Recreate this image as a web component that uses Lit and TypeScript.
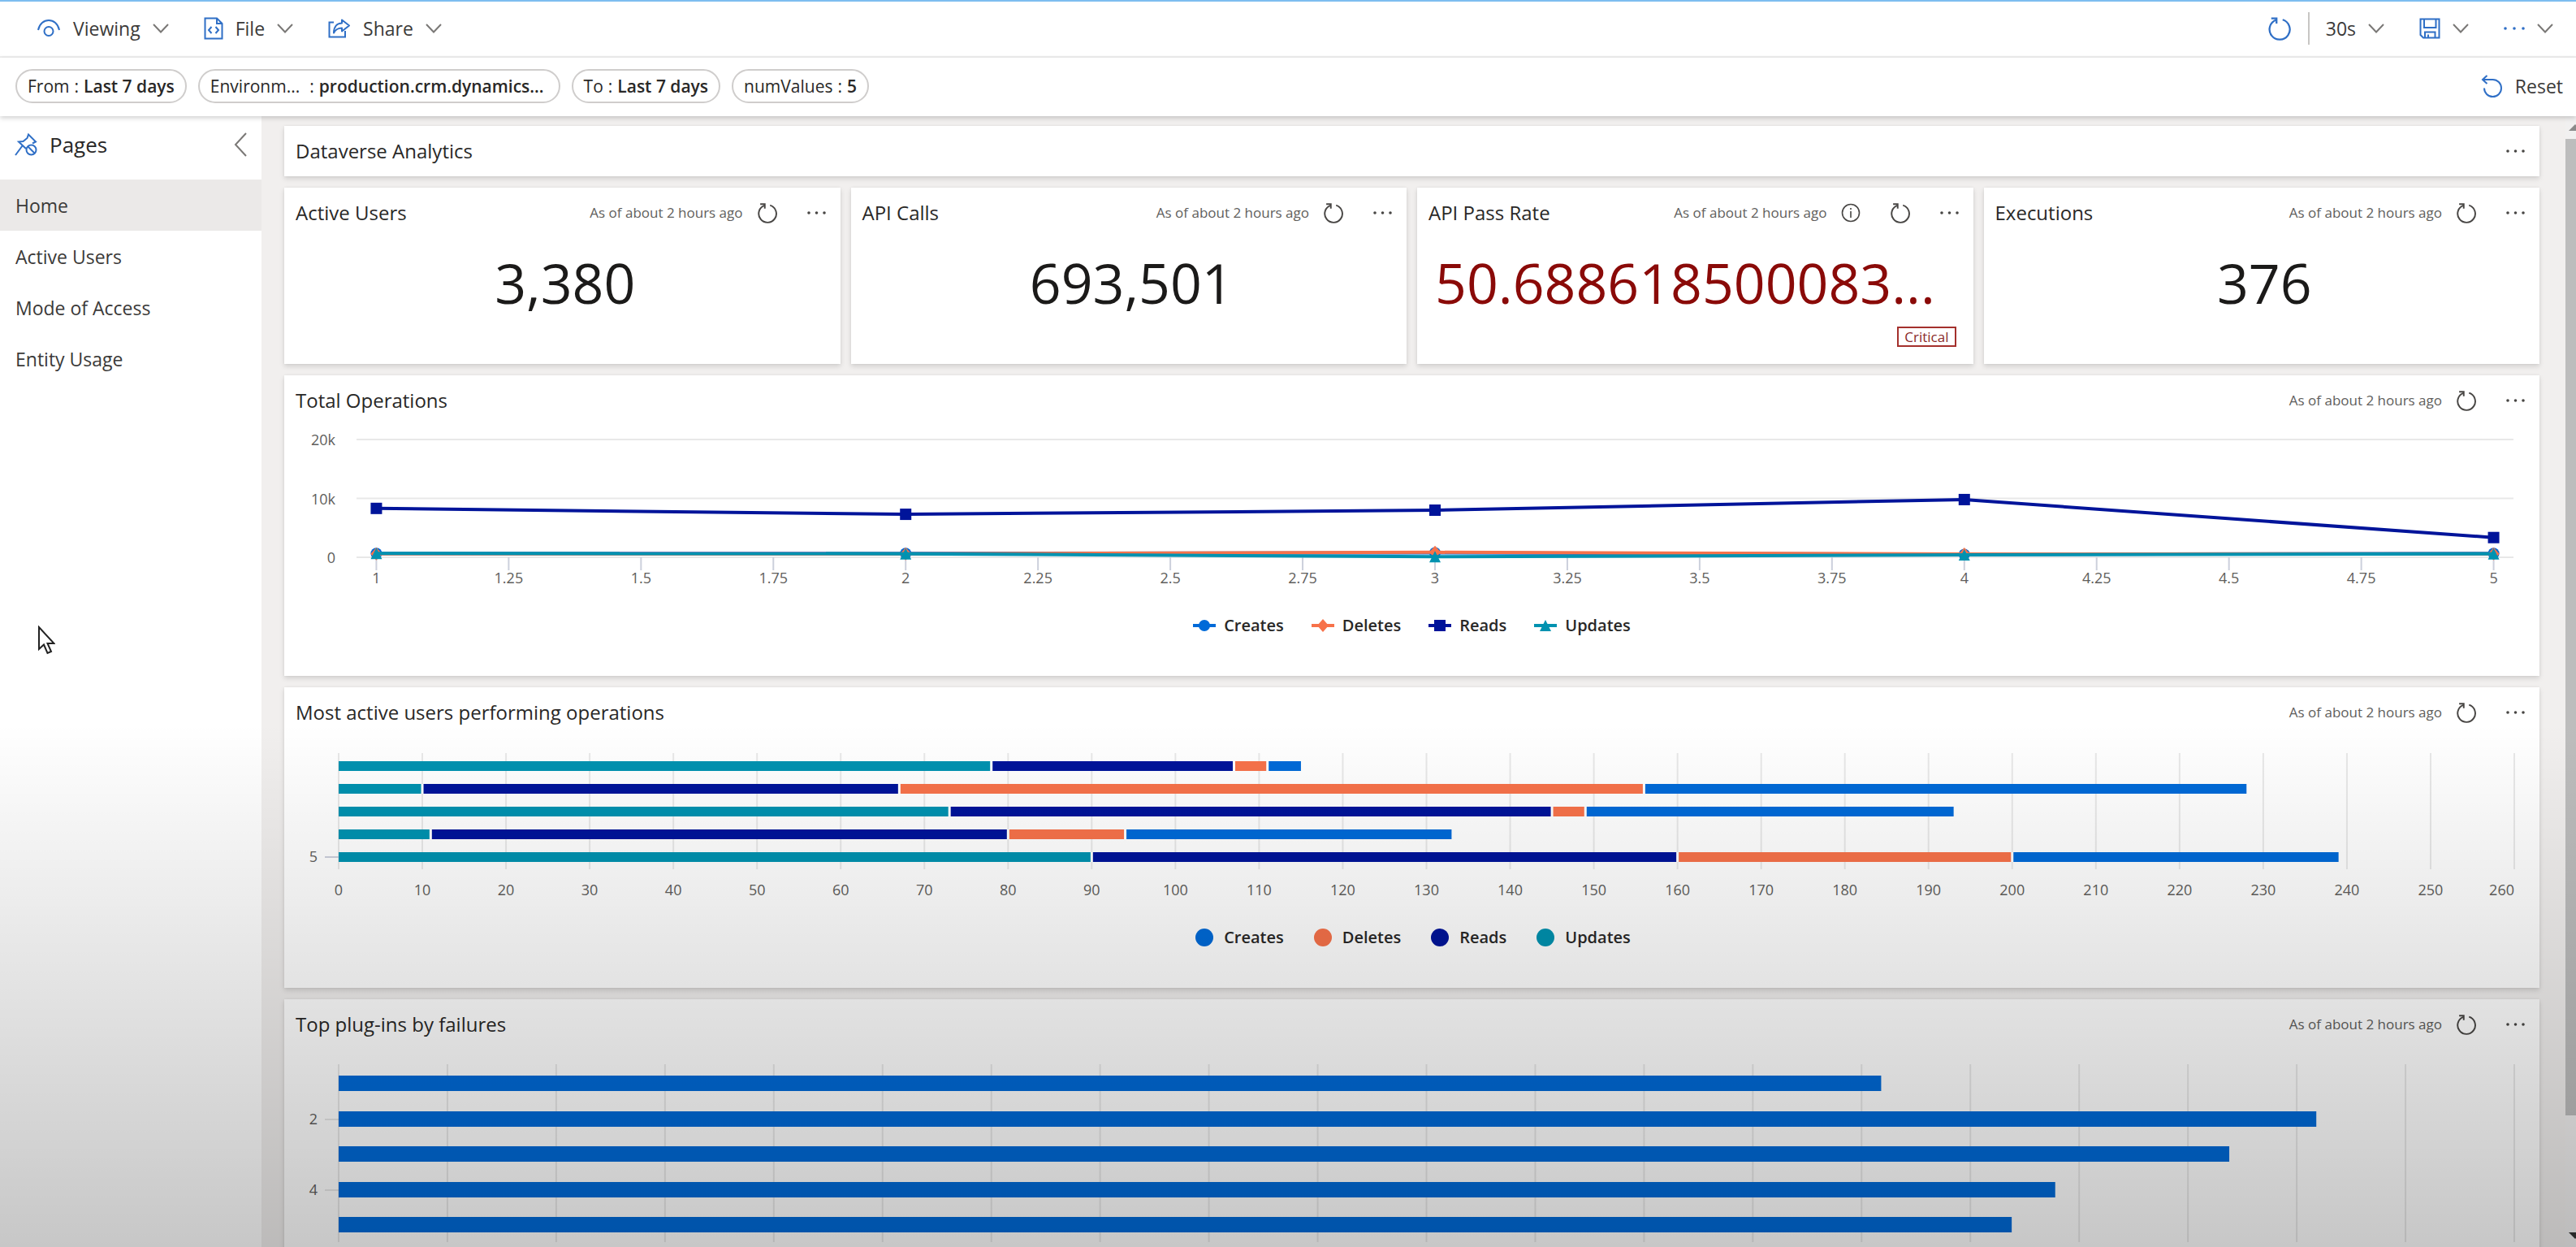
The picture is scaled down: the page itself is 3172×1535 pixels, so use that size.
import { LitElement, html, svg, css, nothing } from "lit";
import { customElement, property } from "lit/decorators.js";

type Series = { name: string; color: string; shape: "circle" | "diamond" | "square" | "triangle" };

const SERIES: Series[] = [
  { name: "Creates", color: "#006ad8", shape: "circle" },
  { name: "Deletes", color: "#f7724a", shape: "diamond" },
  { name: "Reads", color: "#00149a", shape: "square" },
  { name: "Updates", color: "#0092b0", shape: "triangle" },
];

/* Icons ---------------------------------------------------------------- */

const stroke = (w: number, h: number, body: unknown, width = 2) => html`<svg
  width=${w} height=${h} viewBox="0 0 ${w} ${h}" fill="none" stroke="currentColor"
  stroke-width=${width} aria-hidden="true">${body}</svg>`;

const chevron = () => stroke(20, 12, svg`<path d="M1 1L10 10.5L19 1"/>`);
const eye = () => stroke(30, 24, svg`<path d="M2 14C5 -2 25 -2 28 14"/><circle cx="15" cy="15.5" r="5.5"/>`);
const file = () => stroke(24, 28, svg`<path d="M1.500 1.500H16L22.500 8V26.500H1.500Z"/><path d="M16 1.500V8H22.500"/><path d="M9.500 12L6 16L9.500 20M14.500 12L18 16L14.500 20"/>`);
const share = () => stroke(28, 24, svg`<path d="M7 4.500H1.500V22.500H21V15"/><path d="M17 1.500L26 8.500L17 15.500V11.500C12.500 11.500 9 13.500 7 17.500C7 10.500 10.500 5.500 17 5.500Z" stroke-linejoin="round"/>`);
const refresh = (size: number) => html`<svg width=${size} height=${size} viewBox="0 0 24 24" fill="none"
  stroke="currentColor" stroke-width="1.800" aria-hidden="true"><path d="M15 3.400A10 10 0 1 1 8.600 3.600"/><path d="M3.800 2H9V7.200"/></svg>`;
const save = () => stroke(26, 26, svg`<path d="M1.500 1.500H24.500V24.500H5L1.500 21Z"/><path d="M6 1.500V12H20.500V1.500"/><path d="M7 24.500V17.500H19.500V24.500M11 24V20.500"/>`);
const undo = () => stroke(27, 28, svg`<path d="M2 6H14.500A10.500 10.500 0 1 1 4 16.500"/><path d="M7.500 1L2 6L7.500 11"/>`);
const unpin = () => stroke(28, 28, svg`<path d="M14 19L5 10.500L10.500 10L15.500 6L17 1.500L26 10.500L22 12.500"/><path d="M9.500 15.500L1 27"/><circle cx="20.500" cy="20.500" r="6"/><path d="M16.500 16.500L24.500 24.500"/>`);
const collapse = () => stroke(16, 30, svg`<path d="M15 1L2 15L15 29"/>`);
const info = () => stroke(24, 24, svg`<circle cx="12" cy="12" r="10.500"/><path d="M12 10V18M12 6V8"/>`, 1.6);
const dots = (w: number) => html`<svg width=${w} height="6" viewBox="0 0 ${w} 6" fill="currentColor" aria-hidden="true">
  <circle cx="2" cy="3" r="1.800"/><circle cx=${w / 2} cy="3" r="1.800"/><circle cx=${w - 2} cy="3" r="1.800"/></svg>`;

const glyph = (s: Series) => {
  switch (s.shape) {
    case "circle": return svg`<circle r="7" fill=${s.color}/>`;
    case "diamond": return svg`<path d="M0 -8L7 0L0 8L-7 0Z" fill=${s.color}/>`;
    case "square": return svg`<rect x="-7" y="-7" width="14" height="14" fill=${s.color}/>`;
    default: return svg`<path d="M0 -7L7 7H-7Z" fill=${s.color}/>`;
  }
};

const button = css`
  button {
    display: inline-flex; align-items: center; margin: 0; padding: 0;
    border: 0; background: none; color: inherit; font: inherit; cursor: pointer;
  }
  svg { display: block; flex: none; }
`;

/* Tile: white card with title bar -------------------------------------- */

@customElement("dash-tile")
export class DashTile extends LitElement {
  @property() heading = "";
  @property({ type: Boolean }) stamped = false;
  @property({ type: Boolean }) informed = false;

  static styles = [button, css`
    :host { display: block; min-width: 0; background: #fff; box-shadow: 0 3px 6px rgba(0, 0, 0, 0.13), 0 0 3px rgba(0, 0, 0, 0.06); }
    header { display: flex; align-items: center; height: 62px; padding: 0 18px 0 14px; }
    h2 { flex: 1; margin: 0; font-size: 24px; font-weight: 500; line-height: 32px; white-space: nowrap; }
    .stamp { margin-right: 17px; color: #605e5c; font-size: 17px; line-height: 24px; white-space: nowrap; }
    .tools { display: flex; align-items: center; gap: 36px; color: #484644; }
  `];

  render() {
    return html`
      <header>
        <h2>${this.heading}</h2>
        ${this.stamped ? html`<span class="stamp">As of about 2 hours ago</span>` : nothing}
        <div class="tools">
          ${this.informed ? html`<button aria-label="Information">${info()}</button>` : nothing}
          ${this.stamped ? html`<button aria-label="Refresh tile">${refresh(26)}</button>` : nothing}
          <button aria-label="More options">${dots(23)}</button>
        </div>
      </header>
      <slot></slot>`;
  }
}

/* Charts ---------------------------------------------------------------- */

const chart = css`
  :host { display: block; }
  svg { display: block; overflow: visible; }
  .plot { width: 100%; }
  .grid { stroke: #000; stroke-opacity: 0.09; stroke-width: 2; }
  .tick { stroke: #ccd0dc; stroke-width: 2; }
  text { fill: #605e5c; font-size: 18px; }
  .mid { text-anchor: middle; }
  .end { text-anchor: end; }
`;

@customElement("chart-legend")
export class ChartLegend extends LitElement {
  @property({ type: Boolean }) lines = false;

  static styles = [button, css`
    :host { display: flex; justify-content: center; align-items: center; gap: 34px; height: 92px; }
    button { gap: 10px; font-size: 20px; font-weight: 600; line-height: 28px; }
  `];

  render() {
    return SERIES.map(s => html`<button>
      <svg width="28" height="24" viewBox="-14 -12 28 24" aria-hidden="true">
        ${this.lines
          ? svg`<path d="M-14 0H14" stroke=${s.color} stroke-width="4"/>${glyph(s)}`
          : svg`<circle r="11" fill=${s.color}/>`}
      </svg>${s.name}</button>`);
  }
}

@customElement("operations-chart")
export class OperationsChart extends LitElement {
  static styles = [chart, css`
    .frame { padding: 0 32px 0 89px; }
    .line { stroke-width: 4; }
  `];

  private readonly top = 17;
  private readonly base = 162;
  private readonly data = [
    [650, 650, 750, 500, 650],
    [600, 600, 850, 550, 600],
    [8300, 7300, 8000, 9800, 3350],
    [650, 600, 100, 400, 600],
  ];
  private x = (v: number) => `${0.92 + (v - 1) * 24.54}%`;
  private y = (v: number) => this.base - (v / 20000) * (this.base - this.top);

  render() {
    const ticks = Array.from({ length: 17 }, (_, i) => 1 + i / 4);
    return html`<div class="frame"><svg class="plot" height="200" role="img" aria-label="Total operations by series">
      ${[[20000, "20k"], [10000, "10k"], [0, "0"]].map(([v, label]) => svg`
        <line class="grid" x1="0" x2="100%" y1=${this.y(+v)} y2=${this.y(+v)}/>
        <text class="end" x="-26" y=${this.y(+v) + 7}>${label}</text>`)}
      ${ticks.map(t => svg`
        <line class="tick" x1=${this.x(t)} x2=${this.x(t)} y1="162" y2="178"/>
        <text class="mid" x=${this.x(t)} y="194">${t}</text>`)}
      ${SERIES.map((s, k) => svg`
        ${this.data[k].slice(1).map((v, i) => svg`<line class="line" stroke=${s.color}
          x1=${this.x(i + 1)} y1=${this.y(this.data[k][i])} x2=${this.x(i + 2)} y2=${this.y(v)}/>`)}
        ${this.data[k].map((v, i) => svg`<svg x=${this.x(i + 1)} y=${this.y(v)} overflow="visible">${glyph(s)}</svg>`)}`)}
    </svg></div>`;
  }
}

@customElement("users-chart")
export class UsersChart extends LitElement {
  static styles = [chart, css`
    .frame { padding: 0 31px 0 67px; }
    .gap { stroke: #fff; stroke-width: 3; }
  `];

  /* Cumulative ends of the Updates, Reads, Deletes and Creates segments. */
  private readonly rows = [
    [78, 107, 111, 115],
    [10, 67, 156, 228],
    [73, 145, 149, 193],
    [11, 80, 94, 133],
    [90, 160, 200, 239],
  ];
  private x = (v: number) => `${(v / 260) * 100}%`;

  render() {
    const ticks = Array.from({ length: 27 }, (_, i) => i * 10);
    return html`<div class="frame"><svg class="plot" height="200" role="img" aria-label="Operations per user">
      ${ticks.map(t => svg`
        <line class="grid" x1=${this.x(t)} x2=${this.x(t)} y1="19" y2="162"/>
        <text class=${t === 260 ? "end" : "mid"} x=${this.x(t)} y="194">${t}</text>`)}
      <line class="tick" x1="-17" x2="0" y1="147" y2="147"/>
      <text class="end" x="-26" y="153">5</text>
      ${this.rows.map((row, r) => row.map((v, i) => {
        const from = i ? row[i - 1] : 0;
        const y = 29 + r * 28;
        return svg`<rect x=${this.x(from)} y=${y} width=${this.x(v - from)} height="12" fill=${SERIES[3 - i].color}/>
          ${i ? svg`<line class="gap" x1=${this.x(from)} x2=${this.x(from)} y1=${y} y2=${y + 12}/>` : nothing}`;
      }))}
    </svg></div>`;
  }
}

@customElement("plugins-chart")
export class PluginsChart extends LitElement {
  static styles = [chart, css`
    .frame { padding: 0 31px 0 67px; }
  `];

  private readonly rows = [709, 909, 869, 789, 769];

  render() {
    return html`<div class="frame"><svg class="plot" height="308" role="img" aria-label="Failures per plug-in">
      ${Array.from({ length: 21 }, (_, i) => svg`<line class="grid" x1="${i * 5}%" x2="${i * 5}%" y1="18" y2="237"/>`)}
      ${this.rows.map((v, i) => {
        const y = 32 + Math.round(i * 43.5);
        return svg`<rect x="0" y=${y} width="${v / 10}%" height="19" fill=${SERIES[0].color}/>
          ${i % 2 ? svg`<line class="grid" x1="-17" x2="0" y1=${y + 10} y2=${y + 10}/>
            <text class="end" x="-26" y=${y + 16}>${i + 1}</text>` : nothing}`;
      })}
    </svg></div>`;
  }
}

/* Page ------------------------------------------------------------------ */

@customElement("app-root")
export class AppRoot extends LitElement {
  static styles = [button, css`
    :host {
      position: relative; display: flex; flex-direction: column; height: 100vh; overflow: hidden;
      background: #fff; color: #292827; font-family: "Open Sans", "Noto Sans", sans-serif; font-size: 24px; line-height: 32px;
    }
    .commands, .filters { display: flex; align-items: center; justify-content: space-between; box-sizing: border-box; }
    .commands { height: 71px; padding: 0 28px 2px 45px; border-top: 2px solid #7dbdf0; border-bottom: 2px solid #efefef; color: #3b3a39; font-size: 23px; }
    .group { display: flex; align-items: center; gap: 43px; }
    .group.tight { gap: 20px; }
    .commands button { gap: 15px; }
    .blue { display: flex; color: #2f6fc6; }
    .dim { display: flex; color: #7a7876; }
    .rule { width: 2px; height: 40px; background: #c8c6c4; }
    .filters { position: relative; height: 72px; padding: 0 16px 2px 19px; font-size: 21px; box-shadow: 0 2px 6px rgba(0, 0, 0, 0.2); }
    .pills { display: flex; gap: 14px; }
    .pills button { gap: 6px; height: 42px; padding: 0 13px; border: 2px solid #cfcdcc; border-radius: 21px; white-space: nowrap; line-height: 28px; }
    .pills .wide { padding-right: 18px; }
    .wide .name { margin-right: 6px; }
    .pills b { font-weight: 600; }
    .reset { gap: 15px; font-size: 23px; color: #3b3a39; }
    .body { display: flex; flex: 1; min-height: 0; }
    nav { width: 322px; flex: none; background: #fff; }
    .pages { display: flex; align-items: center; box-sizing: border-box; height: 78px; padding: 0 18px 8px; }
    .pages h1 { flex: 1; margin: 0 0 0 15px; font-size: 26px; font-weight: 400; }
    nav a { display: flex; align-items: center; height: 63px; padding: 0 19px; color: #3b3a39; font-size: 23px; text-decoration: none; }
    nav a[aria-current] { background: #ebe9e8; }
    main { flex: 1; min-width: 0; padding: 12px 32px 0 28px; background: #f1efee; overflow: hidden; }
    .stack { display: grid; gap: 14px; }
    .kpis { display: grid; grid-template-columns: repeat(4, minmax(0, 1fr)); gap: 13px; }
    .kpis dash-tile { min-height: 217px; }
    .panel { min-height: 370px; }
    .value { display: flex; justify-content: center; height: 109px; padding-left: 7px; font-size: 68px; line-height: 109px; color: #1b1a19; white-space: nowrap; }
    .value.alert { justify-content: flex-start; padding-left: 22px; color: #8a0a08; }
    .badge-row { display: flex; justify-content: flex-end; padding-right: 21px; }
    .badge { padding: 0 7px; border: 2px solid #a4302c; color: #8a2a2a; font-size: 17px; line-height: 21px; }
    .scroll { display: flex; flex-direction: column; width: 13px; flex: none; overflow: hidden; background: #f1f0f0; }
    .arrow { display: flex; height: 28px; flex: none; align-items: center; padding-left: 4px; }
    .thumb { flex: 1202; background: #bdbdbd; }
    .rest { flex: 134; }
    .shade { position: absolute; inset: 0; pointer-events: none; background: linear-gradient(transparent 58%, rgba(0, 0, 0, 0.22)); }
    .cursor { position: absolute; left: 46px; top: 770px; pointer-events: none; }
  `];

  private menu(icon: unknown, label: string) {
    return html`<button aria-haspopup="menu"><span class="blue">${icon}</span>${label}<span class="dim">${chevron()}</span></button>`;
  }

  private pill(name: string, value: string, wide = false) {
    return html`<button class=${wide ? "wide" : ""}><span class="name">${name}</span><span>:</span><b>${value}</b></button>`;
  }

  render() {
    return html`
      <div class="commands" role="toolbar">
        <div class="group">
          ${this.menu(eye(), "Viewing")} ${this.menu(file(), "File")} ${this.menu(share(), "Share")}
        </div>
        <div class="group">
          <div class="group tight">
            <button aria-label="Refresh"><span class="blue">${refresh(30)}</span></button>
            <span class="rule"></span>
            <button aria-haspopup="menu">30s<span class="dim">${chevron()}</span></button>
          </div>
          <button aria-label="Save" aria-haspopup="menu"><span class="blue">${save()}</span><span class="dim">${chevron()}</span></button>
          <button aria-label="More" aria-haspopup="menu"><span class="blue">${dots(26)}</span><span class="dim">${chevron()}</span></button>
        </div>
      </div>

      <div class="filters">
        <div class="pills">
          ${this.pill("From", "Last 7 days")}
          ${this.pill("Environm...", "production.crm.dynamics...", true)}
          ${this.pill("To", "Last 7 days")}
          ${this.pill("numValues", "5")}
        </div>
        <button class="reset"><span class="blue">${undo()}</span>Reset</button>
      </div>

      <div class="body">
        <nav>
          <div class="pages">
            <button class="blue" aria-label="Unpin pages">${unpin()}</button>
            <h1>Pages</h1>
            <button class="dim" aria-label="Collapse pages">${collapse()}</button>
          </div>
          <a href="#home" aria-current="page">Home</a>
          <a href="#active-users">Active Users</a>
          <a href="#mode-of-access">Mode of Access</a>
          <a href="#entity-usage">Entity Usage</a>
        </nav>

        <main>
          <div class="stack">
            <dash-tile heading="Dataverse Analytics"></dash-tile>
            <div class="kpis">
              <dash-tile heading="Active Users" stamped><div class="value">3,380</div></dash-tile>
              <dash-tile heading="API Calls" stamped><div class="value">693,501</div></dash-tile>
              <dash-tile heading="API Pass Rate" stamped informed>
                <div class="value alert">50.688618500083...</div>
                <div class="badge-row"><span class="badge">Critical</span></div>
              </dash-tile>
              <dash-tile heading="Executions" stamped><div class="value">376</div></dash-tile>
            </div>
            <dash-tile class="panel" heading="Total Operations" stamped>
              <operations-chart></operations-chart>
              <chart-legend lines></chart-legend>
            </dash-tile>
            <dash-tile class="panel" heading="Most active users performing operations" stamped>
              <users-chart></users-chart>
              <chart-legend></chart-legend>
            </dash-tile>
            <dash-tile class="panel" heading="Top plug-ins by failures" stamped>
              <plugins-chart></plugins-chart>
            </dash-tile>
          </div>
        </main>

        <div class="scroll" aria-hidden="true">
          <div class="arrow"><svg width="16" height="8" viewBox="0 0 16 8" fill="#8a8a8a"><path d="M0 8L8 0L16 8Z"/></svg></div>
          <div class="thumb"></div>
          <div class="rest"></div>
          <div class="arrow"><svg width="16" height="8" viewBox="0 0 16 8" fill="#333"><path d="M0 0L8 8L16 0Z"/></svg></div>
        </div>
      </div>

      <div class="shade"></div>
      <svg class="cursor" width="22" height="36" viewBox="0 0 22 36" fill="#fff" stroke="#222" stroke-width="2" aria-hidden="true">
        <path d="M2 2V29L8 23.500L12.500 34L17 32L12.500 22H20.500Z"/>
      </svg>`;
  }
}
